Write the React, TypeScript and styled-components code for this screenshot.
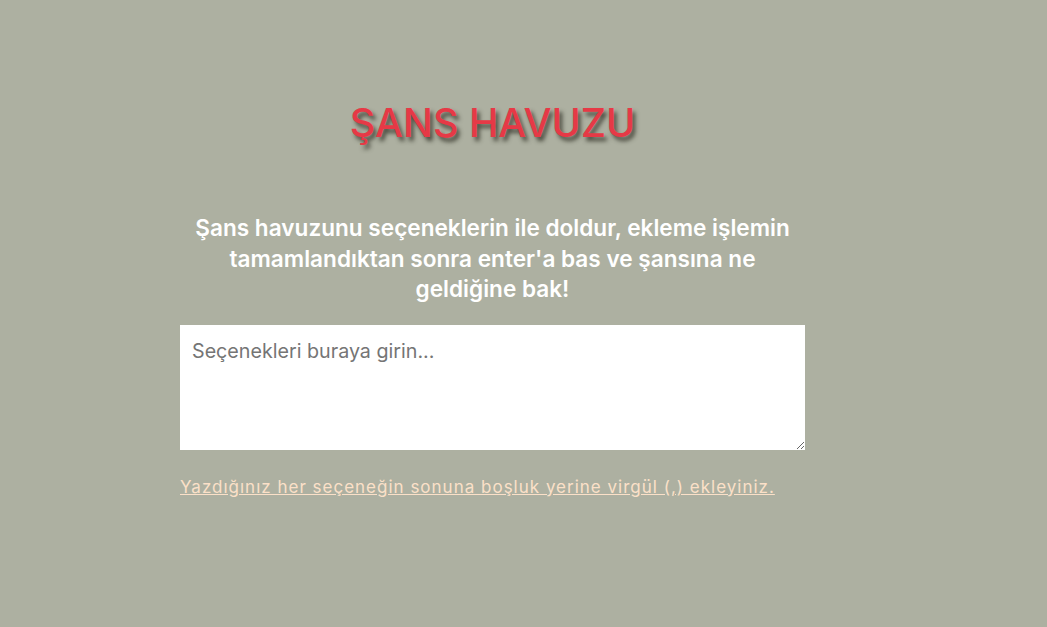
import React from "react";
import styled, { createGlobalStyle } from "styled-components";

const Global = createGlobalStyle`
  html, body { margin: 0; padding: 0; }
  body { background: #adb0a1; min-height: 627px; }
`;

const Page = styled.div`
  display: flex;
  justify-content: flex-start;
  padding-left: 180px;
  padding-top: 99px;
`;

const Column = styled.div`
  width: 625px;
  display: flex;
  flex-direction: column;
  align-items: center;
`;

const Title = styled.h1`
  margin: 0;
  font-family: Inter, sans-serif;
  font-size: 39.5px;
  font-weight: 500;
  color: #e63946;
  text-shadow: 3px 4px 4px rgba(40, 40, 30, 0.75);
  letter-spacing: 0;
`;

const Subtitle = styled.p`
  margin: 66px 0 0;
  width: 612px;
  text-align: center;
  font-family: Inter, sans-serif;
  font-size: 22.6px;
  font-weight: 600;
  line-height: 30.5px;
  color: #ffffff;
`;

const Input = styled.textarea`
  box-sizing: border-box;
  margin-top: 20px;
  width: 625px;
  height: 125px;
  border: none;
  outline: none;
  padding: 14px 12px;
  font-family: Inter, sans-serif;
  font-size: 19.7px;
  color: #333;
  background: #fff;
  resize: vertical;
  &::placeholder { color: #757575; }
`;

const Hint = styled.a`
  align-self: flex-start;
  margin-top: 27px;
  font-family: Inter, sans-serif;
  font-size: 17px;
  letter-spacing: 1px;
  color: #fbe0c8;
  text-decoration: underline;
`;

export default function App() {
  return (
    <>
      <Global />
      <Page>
        <Column>
          <Title>ŞANS HAVUZU</Title>
          <Subtitle>
            Şans havuzunu seçeneklerin ile doldur, ekleme işlemin tamamlandıktan sonra enter'a bas ve şansına ne geldiğine bak!
          </Subtitle>
          <Input placeholder="Seçenekleri buraya girin..." />
          <Hint href="#">Yazdığınız her seçeneğin sonuna boşluk yerine virgül (,) ekleyiniz.</Hint>
        </Column>
      </Page>
    </>
  );
}
